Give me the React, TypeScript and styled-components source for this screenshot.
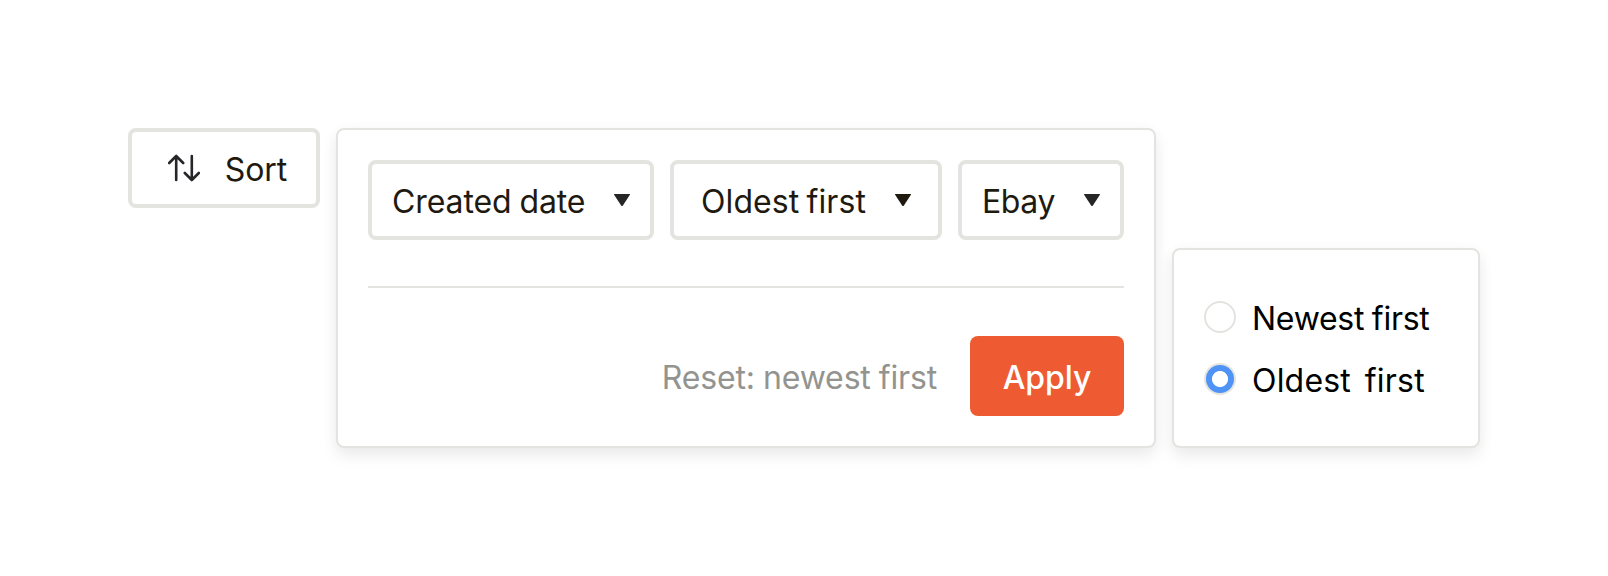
import React from 'react';
import styled, { createGlobalStyle } from 'styled-components';

const line = '#e3e4df';
const ink = '#1e1a10';

const GlobalStyle = createGlobalStyle`
  *, *::before, *::after { box-sizing: border-box; }
  body { margin: 0; background: #fff; }
`;

const Page = styled.main`
  display: flex;
  align-items: flex-start;
  gap: 16px;
  width: 1608px;
  height: 576px;
  padding: 128px;
  font-family: Inter, "Liberation Sans", sans-serif;
  font-size: 32px;
  line-height: 40px;
  color: ${ink};
`;

const Label = styled.span<{ $tracking?: number; $wordGap?: number }>`
  display: block;
  padding-top: 4px;
  white-space: pre;
  letter-spacing: ${({ $tracking = 0 }) => $tracking}px;
  word-spacing: ${({ $wordGap = 0 }) => $wordGap}px;
`;

const OutlineButton = styled.button<{ $width: number; $inset: number; $trail: number }>`
  display: flex;
  align-items: center;
  justify-content: space-between;
  flex: none;
  width: ${({ $width }) => $width}px;
  height: 80px;
  padding: 0 ${({ $trail }) => $trail}px 0 ${({ $inset }) => $inset}px;
  border: 4px solid ${line};
  border-radius: 8px;
  background: #fff;
  color: inherit;
  font: inherit;
`;

const Panel = styled.section`
  border: 2px solid ${line};
  border-radius: 8px;
  background: #fff;
  box-shadow: 0 8px 16px rgba(0, 0, 0, 0.08), 0 0 16px rgba(0, 0, 0, 0.02);
`;

const SortPanel = styled(Panel)`
  flex: none;
  width: 820px;
  height: 320px;
  padding: 30px;
`;

const Selects = styled.div`
  display: flex;
  gap: 16px;
`;

const Divider = styled.hr`
  height: 2px;
  margin: 46px 0 48px;
  border: 0;
  background: ${line};
`;

const Actions = styled.div`
  display: flex;
  align-items: center;
  justify-content: flex-end;
  gap: 33px;
`;

const ResetButton = styled.button`
  padding: 0;
  border: 0;
  background: none;
  color: #93938f;
  font: inherit;
`;

const ApplyButton = styled.button`
  width: 154px;
  height: 80px;
  padding: 0;
  border: 0;
  border-radius: 8px;
  background: #ee5a32;
  color: #fff;
  font: inherit;
  font-weight: 500;
`;

const OrderPanel = styled(Panel)`
  display: flex;
  flex-direction: column;
  gap: 30px;
  width: 308px;
  height: 200px;
  margin-top: 120px;
  padding: 51px 30px 0;
`;

const Option = styled.div`
  display: flex;
  align-items: center;
  gap: 16px;
  height: 32px;
  color: #000;
`;

const Radio = styled.span<{ $checked?: boolean }>`
  flex: none;
  width: 32px;
  height: 32px;
  border: 2px solid ${line};
  border-radius: 50%;
  background: ${({ $checked }) =>
    $checked ? 'radial-gradient(circle, #fff 7.6px, #4f93f7 8.4px)' : '#fff'};
`;

const SortIcon = () => (
  <svg width="32" height="28" viewBox="0 0 32 28" fill="none" stroke="#26262a" strokeWidth="2.6" strokeLinecap="round" strokeLinejoin="round">
    <path d="M8.2 26V2M1.2 9l7-7 7 7M23.8 2v24M16.8 19l7 7 7-7" />
  </svg>
);

const Caret = ({ color = '#262626' }: { color?: string }) => (
  <svg width="16" height="12" viewBox="0 0 16 12">
    <path d="M0.5 0h15q.8 0 .4.8L8.9 11.4q-.9 1.2-1.8 0L.1.8Q-.3 0 .5 0z" fill={color} />
  </svg>
);

export default function App() {
  return (
    <>
      <GlobalStyle />
      <Page>
        <OutlineButton $width={192} $inset={36} $trail={29}>
          <SortIcon />
          <Label $tracking={-0.15}>Sort</Label>
        </OutlineButton>

        <SortPanel>
          <Selects>
            <OutlineButton $width={286} $inset={20} $trail={20}>
              <Label $tracking={-0.1} $wordGap={-1}>Created date</Label>
              <Caret />
            </OutlineButton>
            <OutlineButton $width={272} $inset={27} $trail={27}>
              <Label $tracking={0.1} $wordGap={-2}>Oldest first</Label>
              <Caret color={ink} />
            </OutlineButton>
            <OutlineButton $width={166} $inset={20} $trail={20}>
              <Label $tracking={-0.4}>Ebay</Label>
              <Caret />
            </OutlineButton>
          </Selects>
          <Divider />
          <Actions>
            <ResetButton>
              <Label $tracking={-0.15} $wordGap={-0.8}>Reset: newest first</Label>
            </ResetButton>
            <ApplyButton>
              <Label $tracking={-0.1}>Apply</Label>
            </ApplyButton>
          </Actions>
        </SortPanel>

        <OrderPanel>
          <Option>
            <Radio />
            <Label $tracking={-0.28} $wordGap={-1}>Newest first</Label>
          </Option>
          <Option>
            <Radio $checked />
            <Label $tracking={0.2} $wordGap={-2.3}>Oldest  first</Label>
          </Option>
        </OrderPanel>
      </Page>
    </>
  );
}
